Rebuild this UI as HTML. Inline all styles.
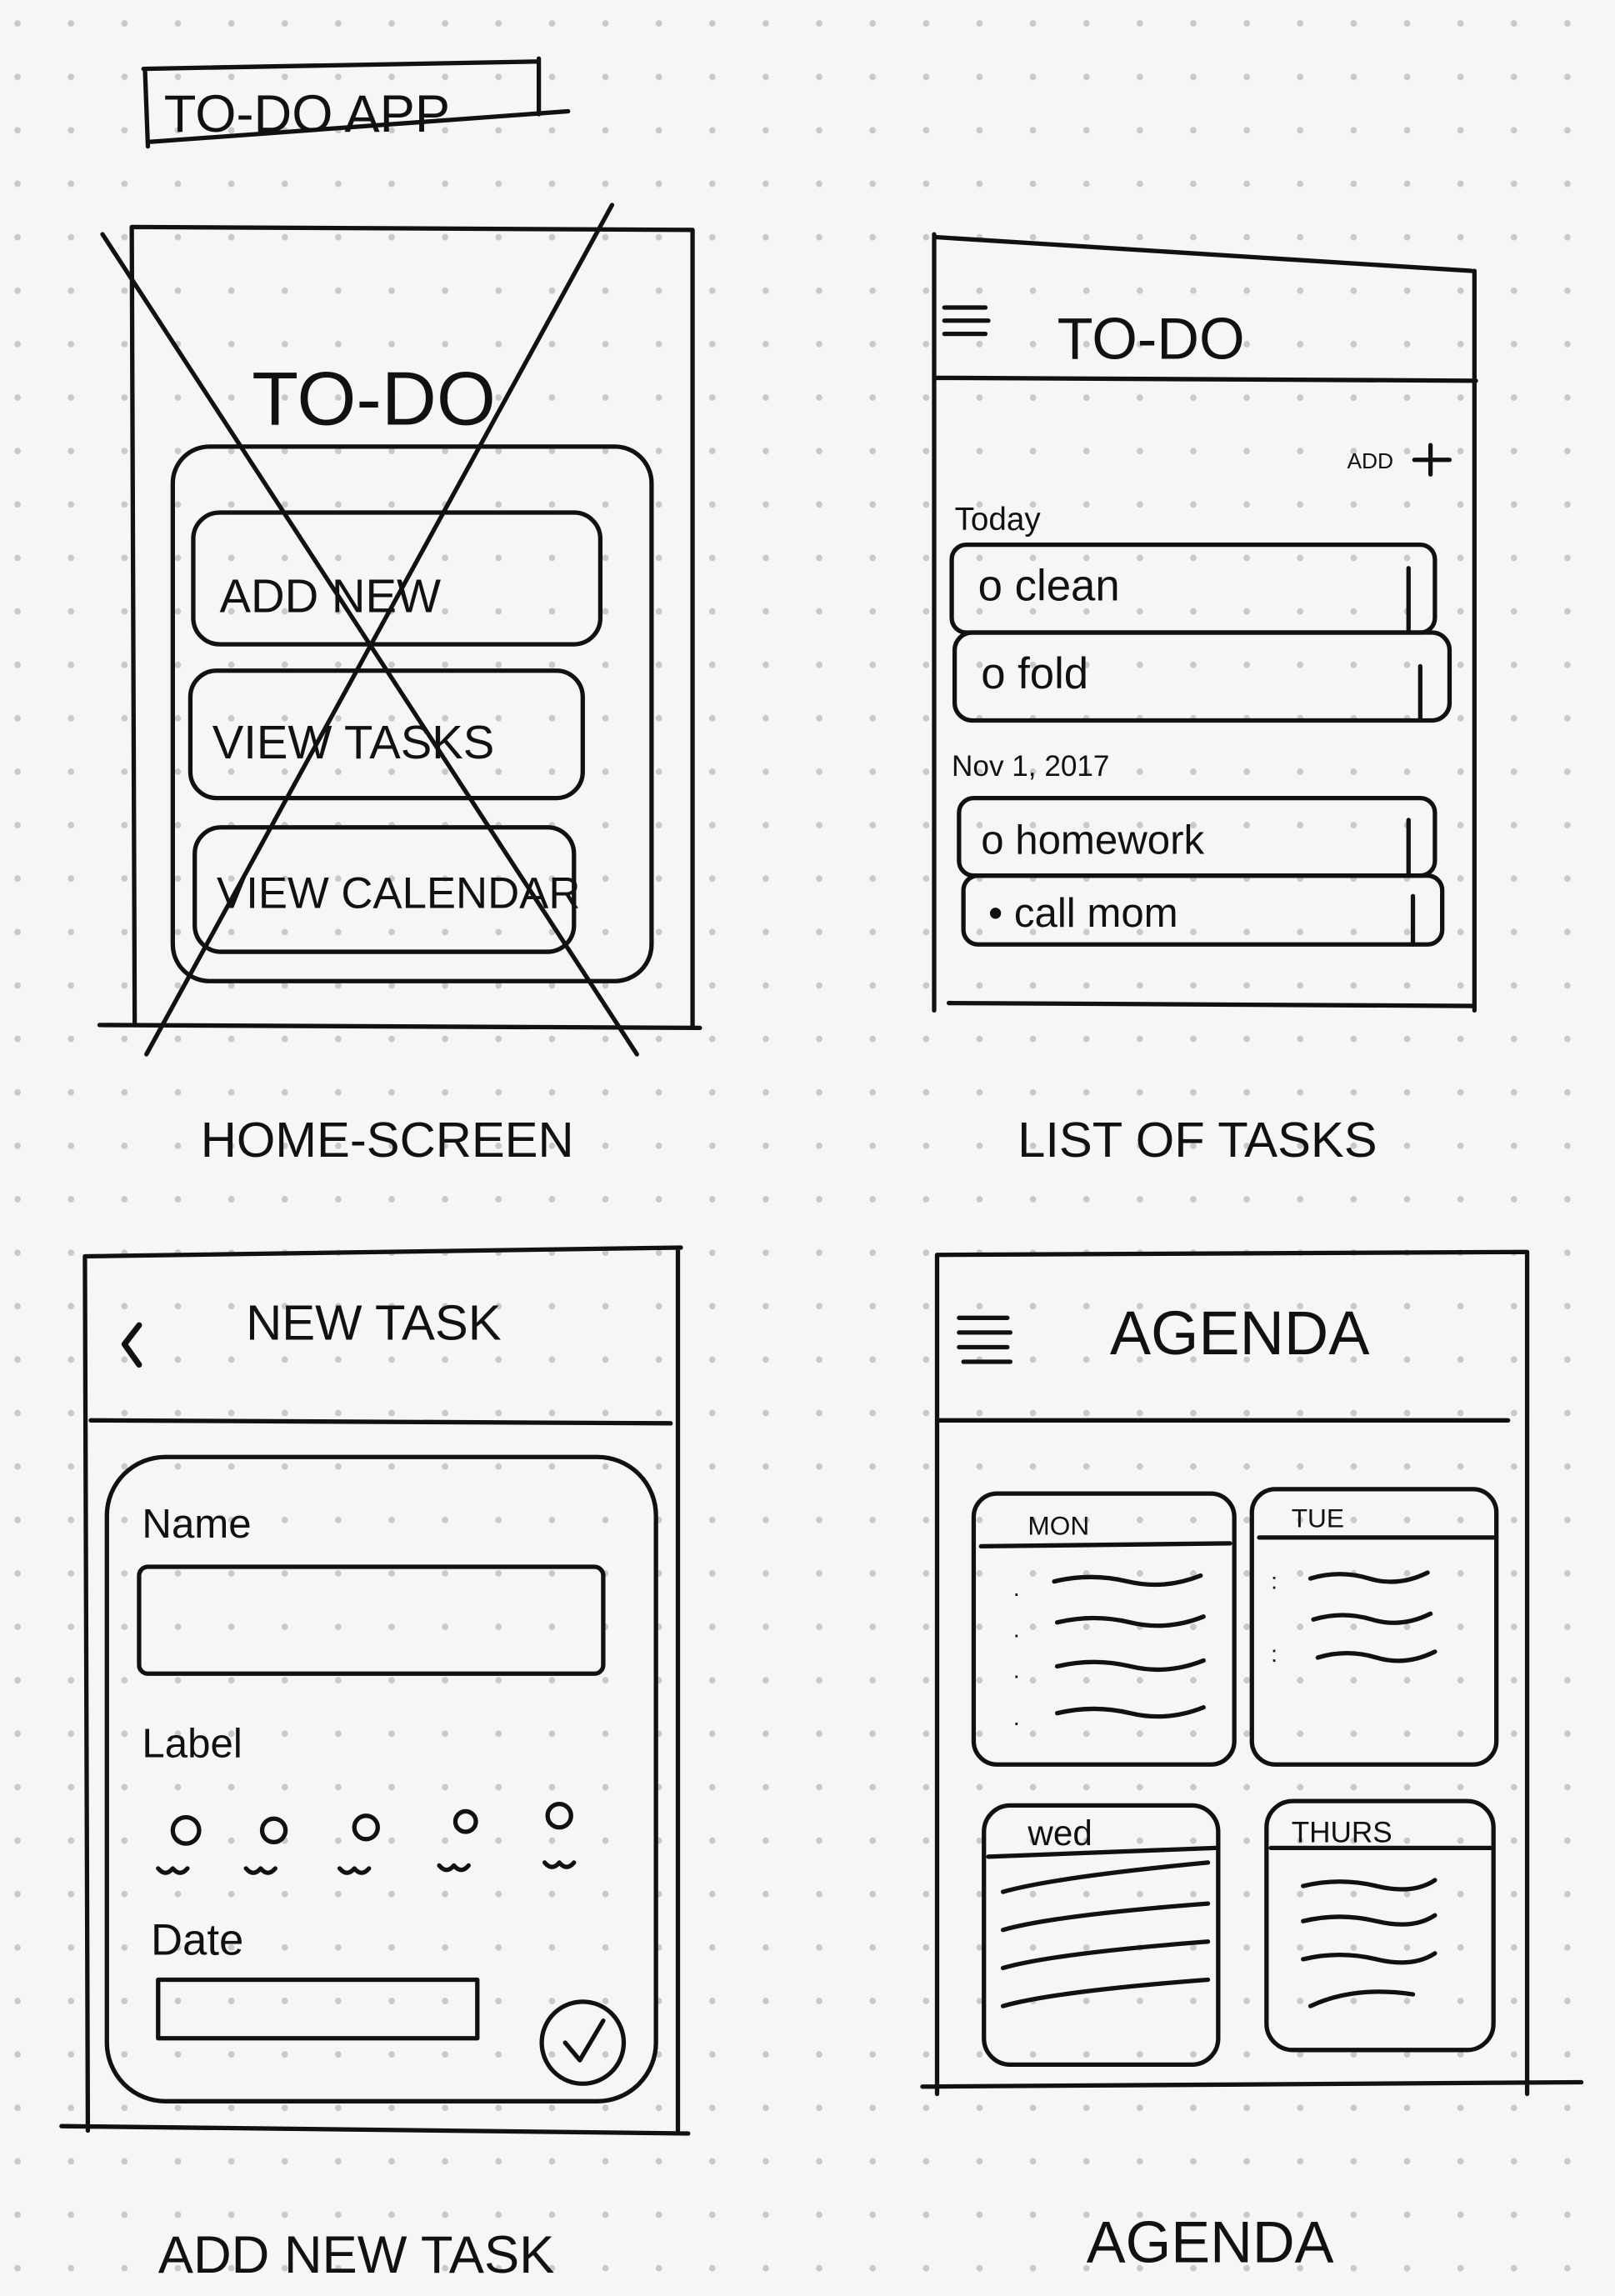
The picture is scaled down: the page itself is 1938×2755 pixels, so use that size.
<!DOCTYPE html>
<html><head><meta charset="utf-8"><style>
html,body{margin:0;padding:0;background:#f6f6f4;}
svg{display:block;}
text{font-family:"Liberation Sans",sans-serif;fill:#111;}
</style></head><body>
<svg width="1938" height="2755" viewBox="0 0 1103 1568" xmlns="http://www.w3.org/2000/svg">
<defs>
<pattern id="dots" x="8" y="12" width="36.5" height="36.5" patternUnits="userSpaceOnUse">
<circle cx="4" cy="4" r="2.2" fill="#c9c9c9"/>
</pattern>
</defs>
<rect width="1103" height="1568" fill="#f6f6f4"/>
<rect width="1103" height="1568" fill="url(#dots)"/>
<g fill="none" stroke="#111" stroke-width="3" stroke-linecap="round" stroke-linejoin="round">
<path d="M98 47 L368 42 M99 47 L101 100 M101 97 L388 76 M368 40 L368 78"/>
<path d="M90 155 L473 157 L473 700 M90 155 L92 700 M68 700 L478 702"/>
<path d="M70 160 L435 720 M418 140 L100 720"/>
<rect x="118" y="305" width="327" height="365" rx="25"/>
<rect x="132" y="350" width="278" height="90" rx="18"/>
<rect x="130" y="458" width="268" height="87" rx="18"/>
<rect x="133" y="565" width="259" height="85" rx="18"/>
<path d="M640 162 L1005 185 M638 160 L638 690 M1007 185 L1007 690 M638 258 L1008 260 M648 685 L1005 687"/>
<path d="M645 210 L673 210 M645 219 L675 219 M645 228 L673 228"/>
<path d="M966 314 L990 314 M977 304 L977 324"/>
<rect x="650" y="372" width="330" height="60" rx="10"/>
<path d="M962 388 L962 430"/>
<rect x="652" y="432" width="338" height="60" rx="12"/>
<path d="M970 455 L970 492"/>
<rect x="655" y="545" width="325" height="53" rx="10"/>
<path d="M962 560 L962 598"/>
<rect x="658" y="598" width="327" height="47" rx="10"/>
<path d="M965 612 L965 645"/>
<path d="M58 858 L465 852 M58 858 L60 1455 M463 852 L463 1455 M62 970 L458 972 M42 1452 L470 1457"/>
<path d="M95 905 L85 918 L95 932" stroke-width="4"/>
<rect x="73" y="995" width="375" height="440" rx="40"/>
<rect x="95" y="1070" width="317" height="73" rx="6"/>
<circle cx="127" cy="1250" r="9"/><circle cx="187" cy="1250" r="8"/><circle cx="250" cy="1248" r="8"/><circle cx="318" cy="1244" r="7"/><circle cx="382" cy="1240" r="8"/>
<path d="M108 1276 q5 6 10 0 q5 6 10 0 M168 1276 q5 6 10 0 q5 6 10 0 M232 1276 q5 6 10 0 q5 6 10 0 M300 1274 q5 6 10 0 q5 6 10 0 M372 1272 q5 6 10 0 q5 6 10 0"/>
<rect x="108" y="1352" width="218" height="40"/>
<circle cx="398" cy="1395" r="28"/>
<path d="M386 1395 L396 1407 L412 1380"/>
<path d="M640 857 L1043 855 M640 857 L640 1430 M1043 855 L1043 1430 M640 970 L1030 970 M630 1425 L1080 1422"/>
<path d="M655 900 L688 900 M655 910 L690 910 M655 920 L688 920 M658 930 L690 930"/>
<rect x="665" y="1020" width="178" height="185" rx="16"/>
<path d="M670 1056 L840 1054 M720 1080 q25 -6 50 0 t50 -4 M722 1108 q25 -6 50 0 t50 -4 M722 1138 q25 -6 50 0 t50 -4 M722 1170 q25 -6 50 0 t50 -4"/>
<rect x="855" y="1017" width="167" height="188" rx="16"/>
<path d="M860 1050 L1020 1050 M895 1078 q20 -6 40 0 t40 -4 M897 1106 q20 -6 40 0 t40 -4 M900 1132 q20 -6 40 0 t40 -4"/>
<rect x="672" y="1233" width="160" height="177" rx="18"/>
<path d="M675 1268 L830 1262 M685 1292 q35 -10 140 -20 M685 1318 q35 -10 140 -18 M685 1344 q35 -10 140 -18 M685 1370 q35 -10 140 -18"/>
<rect x="865" y="1230" width="155" height="170" rx="18"/>
<path d="M868 1262 L1018 1262 M890 1288 q25 -6 50 0 t40 -4 M890 1312 q25 -6 50 0 t40 -4 M890 1338 q25 -6 50 0 t40 -4 M895 1370 q30 -14 70 -8"/>
</g>
<g>
<text x="112" y="90" font-size="36">TO-DO APP</text>
<text x="172" y="290" font-size="52">TO-DO</text>
<text x="150" y="418" font-size="32">ADD NEW</text>
<text x="145" y="518" font-size="32">VIEW TASKS</text>
<text x="148" y="620" font-size="30">VIEW CALENDAR</text>
<text x="137" y="790" font-size="34">HOME-SCREEN</text>
<text x="722" y="245" font-size="40">TO-DO</text>
<text x="920" y="320" font-size="15">ADD</text>
<text x="652" y="362" font-size="22">Today</text>
<text x="668" y="410" font-size="30">o clean</text>
<text x="670" y="470" font-size="30">o fold</text>
<text x="650" y="530" font-size="20">Nov 1, 2017</text>
<text x="670" y="583" font-size="28">o homework</text>
<text x="675" y="633" font-size="28">• call mom</text>
<text x="695" y="790" font-size="34">LIST OF TASKS</text>
<text x="168" y="915" font-size="34">NEW TASK</text>
<text x="97" y="1050" font-size="28">Name</text>
<text x="97" y="1200" font-size="28">Label</text>
<text x="103" y="1335" font-size="30">Date</text>
<text x="108" y="1552" font-size="36">ADD NEW TASK</text>
<text x="758" y="925" font-size="42">AGENDA</text>
<text x="702" y="1048" font-size="18">MON</text>
<text x="882" y="1043" font-size="18">TUE</text>
<text x="702" y="1260" font-size="24">wed</text>
<text x="882" y="1258" font-size="20">THURS</text>
<text x="868" y="1085" font-size="16">:</text>
<text x="868" y="1135" font-size="16">:</text>
<text x="692" y="1090" font-size="16">.</text>
<text x="692" y="1118" font-size="16">.</text>
<text x="692" y="1146" font-size="16">.</text>
<text x="692" y="1178" font-size="16">.</text>
<text x="742" y="1545" font-size="40">AGENDA</text>
</g>
</svg>
</body></html>
